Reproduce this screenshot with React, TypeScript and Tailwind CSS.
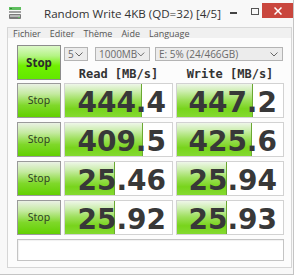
import React from "react";

type Row = { read: string; readBar: number; write: string; writeBar: number };

const rows: Row[] = [
  { read: "444.4", readBar: 77, write: "447.2", writeBar: 76 },
  { read: "409.5", readBar: 78, write: "425.6", writeBar: 75 },
  { read: "25.46", readBar: 50, write: "25.94", writeBar: 50 },
  { read: "25.92", readBar: 50, write: "25.93", writeBar: 50 },
];

function Cell({ value, bar, w }: { value: string; bar: number; w: string }) {
  return (
    <div className={`relative ${w} h-[35px] border border-[#d2d2d2] bg-white`}>
      <div
        className="absolute left-0 top-0 bottom-0 border-r border-[#6aa832] bg-[linear-gradient(to_bottom,#eef6e8_0%,#cdeeb0_22%,#9ee05c_48%,#78d41c_75%,#84da30_100%)]"
        style={{ width: bar }}
      />
      <div
        className="relative flex h-full justify-end pr-[6px] pt-[5px] text-[28px] font-bold leading-[28px] text-[#383838]"
        style={{ fontFamily: "'DejaVu Sans', sans-serif" }}
      >
        {value}
      </div>
    </div>
  );
}

function Select({ w, label }: { w: string; label: string }) {
  return (
    <div
      className={`${w} h-[14px] flex items-center justify-between border border-[#b4b4b4] bg-[#ececec] pl-[3px] pr-[4px] text-[10px] leading-none text-[#6a6a6a]`}
      style={{ fontFamily: "'Open Sans', sans-serif" }}
    >
      <span>{label}</span>
      <svg width="8" height="5" viewBox="0 0 8 5">
        <path d="M0.5 0.5 L4 4 L7.5 0.5" fill="none" stroke="#666" strokeWidth="1" />
      </svg>
    </div>
  );
}

export default function App() {
  return (
    <div className="w-[300px] h-[275px] bg-white overflow-hidden">
      <div className="w-[294px] h-[275px] bg-[#f8f8f8] border-r border-b border-[#c4c4c4] flex flex-col">
        {/* Title bar */}
        <div className="h-[27px] flex items-start relative shrink-0">
          <svg className="ml-[9px] mt-[7px]" width="12" height="12" viewBox="0 0 12 12">
            <rect x="0" y="0" width="12" height="3" fill="#5fbf5f" />
            <rect x="1" y="1" width="2" height="1" fill="#2e8b2e" />
            <rect x="0" y="4" width="12" height="2" fill="#a0a0a0" />
            <rect x="0" y="7" width="12" height="5" rx="1" fill="#7a7a7a" />
            <rect x="1" y="8" width="10" height="2" fill="#b8b8b8" />
            <rect x="9" y="10" width="2" height="1" fill="#5fbf5f" />
          </svg>
          <div
            className="ml-[23px] mt-[6px] text-[11.6px] leading-[16px] text-[#333]"
            style={{ fontFamily: "'Open Sans', sans-serif" }}
          >
            Random Write 4KB (QD=32) [4/5]
          </div>
          <div className="absolute left-[230px] top-[12px] w-[7px] h-[2px] bg-[#444]" />
          <div className="absolute left-[251px] top-[8px] w-[8px] h-[7px] border border-[#555]" />
          <div className="absolute left-[262px] top-[3px] w-[31px] h-[15px] bg-[#c9463d] flex items-center justify-center">
            <svg width="8" height="8" viewBox="0 0 8 8">
              <path d="M0.5 0.5 L7.5 7.5 M7.5 0.5 L0.5 7.5" stroke="#fff" strokeWidth="1.5" />
            </svg>
          </div>
        </div>

        {/* Client area */}
        <div className="ml-[7px] w-[285px] h-[241px] border border-[#d6d6d6] bg-[#fcfcfc] flex flex-col">
          {/* Menu */}
          <div
            className="h-[10px] bg-[#f0f0f0] flex items-center gap-[9px] pl-[5px] text-[9px] leading-none text-[#555]"
            style={{ fontFamily: "'Open Sans', sans-serif" }}
          >
            <span>Fichier</span>
            <span>Editer</span>
            <span>Thème</span>
            <span>Aide</span>
            <span>Language</span>
          </div>

          <div className="flex flex-col pl-[9px] pt-[7px] gap-[3px]">
            {/* Top row */}
            <div className="flex gap-[3px] h-[35px]">
              <div
                className="w-[44px] h-[35px] border border-[#8c8c8c] bg-[linear-gradient(to_bottom,#dcf8c8_0%,#b4f484_30%,#70f000_60%,#62e800_100%)] flex items-center justify-center text-[11.5px] font-bold text-[#2a2a2a]"
                style={{ fontFamily: "'Noto Sans', sans-serif" }}
              >
                Stop
              </div>
              <div className="flex flex-col">
                <div className="flex mt-[2px]">
                  <Select w="w-[24px]" label="5" />
                  <div className="w-[7px]" />
                  <Select w="w-[55px]" label="1000MB" />
                  <div className="w-[5px]" />
                  <Select w="w-[128px]" label="E: 5% (24/466GB)" />
                </div>
                <div
                  className="flex mt-[6px] text-[12px] font-bold leading-[14px] text-[#333]"
                  style={{ fontFamily: "'DejaVu Sans Mono', monospace" }}
                >
                  <div className="w-[109px] text-center">Read [MB/s]</div>
                  <div className="w-[3px]" />
                  <div className="w-[108px] text-center">Write [MB/s]</div>
                </div>
              </div>
            </div>

            <div className="flex flex-col gap-[4px]">
              {rows.map((r, i) => (
                <div key={i} className="flex gap-[3px]">
                  <div
                    className="w-[44px] h-[35px] border border-[#9a9a9a] bg-[linear-gradient(to_bottom,#eaf1e4_0%,#c4eaa0_30%,#7fd82a_65%,#62d000_100%)] flex items-center justify-center text-[10.5px] text-[#2f3f22]"
                    style={{ fontFamily: "'Noto Sans', sans-serif" }}
                  >
                    Stop
                  </div>
                  <Cell value={r.read} bar={r.readBar} w="w-[109px]" />
                  <Cell value={r.write} bar={r.writeBar} w="w-[108px]" />
                </div>
              ))}
            </div>

            <div className="mt-[1px] w-[267px] h-[22px] border border-[#c4c4c4] bg-white shadow-[inset_1px_1px_1px_rgba(0,0,0,0.06)]" />
          </div>
        </div>
      </div>
    </div>
  );
}
